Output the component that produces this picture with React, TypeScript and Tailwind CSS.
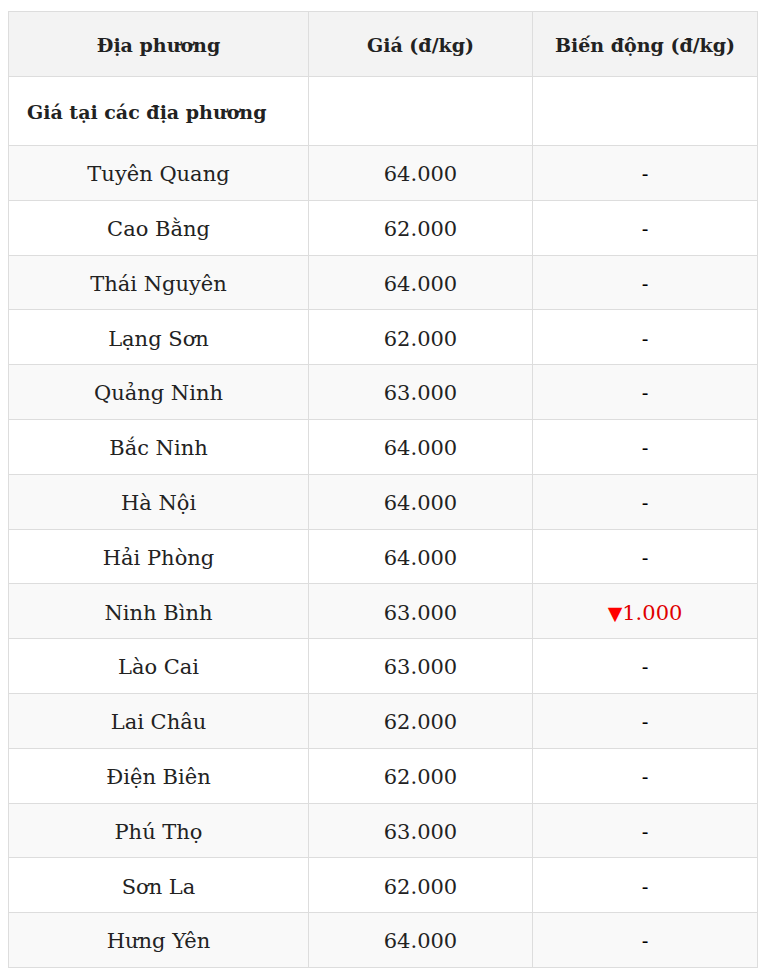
const rows: [string, string, string][] = [
  ["Tuyên Quang", "64.000", "-"],
  ["Cao Bằng", "62.000", "-"],
  ["Thái Nguyên", "64.000", "-"],
  ["Lạng Sơn", "62.000", "-"],
  ["Quảng Ninh", "63.000", "-"],
  ["Bắc Ninh", "64.000", "-"],
  ["Hà Nội", "64.000", "-"],
  ["Hải Phòng", "64.000", "-"],
  ["Ninh Bình", "63.000", "▼1.000"],
  ["Lào Cai", "63.000", "-"],
  ["Lai Châu", "62.000", "-"],
  ["Điện Biên", "62.000", "-"],
  ["Phú Thọ", "63.000", "-"],
  ["Sơn La", "62.000", "-"],
  ["Hưng Yên", "64.000", "-"],
];

export default function App() {
  return (
    <div className="min-h-screen bg-white px-2 pt-[11px] font-['DejaVu_Serif',serif] text-[#222]">
      <table className="w-[749px] table-fixed border-collapse text-[21px]">
        <colgroup>
          <col className="w-[300px]" />
          <col className="w-[224px]" />
          <col className="w-[225px]" />
        </colgroup>
        <thead>
          <tr className="h-[65px] bg-[#f3f3f3] text-[19px]">
            {["Địa phương", "Giá (đ/kg)", "Biến động (đ/kg)"].map((h) => (
              <th key={h} className="border border-[#dddddd] pt-[2px] text-center font-bold">
                {h}
              </th>
            ))}
          </tr>
        </thead>
        <tbody>
          <tr className="h-[69px] bg-white text-[19px]">
            <td className="border border-[#dddddd] pl-[18px] pt-[2px] text-left font-bold">
              Giá tại các địa phương
            </td>
            <td className="border border-[#dddddd]" />
            <td className="border border-[#dddddd]" />
          </tr>
          {rows.map(([name, price, change], i) => (
            <tr key={name} className={`h-[54.8px] ${i % 2 === 0 ? "bg-[#f9f9f9]" : "bg-white"}`}>
              <td className="border border-[#dddddd] pt-1 text-center">{name}</td>
              <td className="border border-[#dddddd] pt-1 text-center">{price}</td>
              <td className="border border-[#dddddd] pt-1 text-center">
                {change === "-" ? (
                  <span className="font-['Liberation_Sans',sans-serif] text-[20px] text-black">-</span>
                ) : (
                  <span className="text-[#e00000]">
                    <span className="font-['DejaVu_Sans',sans-serif] text-[19px] text-[#ff0000]">▼</span>
                    {change.slice(1)}
                  </span>
                )}
              </td>
            </tr>
          ))}
        </tbody>
      </table>
    </div>
  );
}
